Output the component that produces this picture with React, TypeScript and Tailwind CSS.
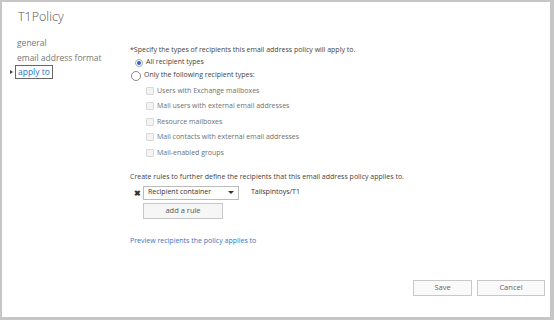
import React from "react";

const font = { fontFamily: '"Open Sans", "Noto Sans", sans-serif' };

function Check({ label }: { label: string }) {
  return (
    <div className="flex items-center h-[15.5px] pl-[16px]">
      <span className="w-[8px] h-[8px] border border-[#d8d8d8] bg-[#f4f4f4] rounded-[1px] mr-[3px]" />
      <span className="text-[7px] text-[#707070]">{label}</span>
    </div>
  );
}

export default function App() {
  return (
    <div style={font} className="w-[554px] h-[320px] bg-[#c6c6c6] pt-[2px] pl-[2px] pr-[4px] pb-[3px]">
      <div className="w-full h-full bg-white flex flex-col">
        <div className="pl-[16px] pt-[6px] text-[12.5px] font-light text-[#555] leading-[18px] h-[30px]">T1Policy</div>
        <div className="flex flex-1">
          <div className="w-[128px] pl-[15px] pt-[3px] text-[8.5px] leading-[15px] text-[#777]">
            <div>general</div>
            <div>email address format</div>
            <div className="relative flex items-center ml-[-2px]">
              <span className="absolute left-[-5px] top-[5px] w-0 h-0 border-y-[2.5px] border-y-transparent border-l-[3px] border-l-[#444]" />
              <span className="border border-[#666] px-[2px] leading-[12px] text-[#2a72c8]">apply to</span>
            </div>
          </div>
          <div className="flex-1 pt-[13px] text-[#444]">
            <div className="text-[7px] leading-[10px]">*Specify the types of recipients this email address policy will apply to.</div>
            <div className="flex items-center h-[13px] pl-[5px] mt-[1px]">
              <span className="w-[8px] h-[8px] rounded-full border border-[#aaa] bg-white flex items-center justify-center mr-[3px]">
                <span className="w-[4px] h-[4px] rounded-full bg-[#2166d4]" />
              </span>
              <span className="text-[7px]">All recipient types</span>
            </div>
            <div className="flex items-center h-[13px] pl-[1px]">
              <span className="w-[10px] h-[10px] rounded-full border border-[#888] bg-white mr-[3px]" />
              <span className="text-[7px]">Only the following recipient types:</span>
            </div>
            <div className="mt-[1px]">
              <Check label="Users with Exchange mailboxes" />
              <Check label="Mail users with external email addresses" />
              <Check label="Resource mailboxes" />
              <Check label="Mail contacts with external email addresses" />
              <Check label="Mail-enabled groups" />
            </div>
            <div className="mt-[11px] text-[7px] leading-[10px]">Create rules to further define the recipients that this email address policy applies to.</div>
            <div className="flex items-center mt-[4px] h-[14px]">
              <span className="w-[13px] text-[8px] text-[#333] pl-[4px] font-bold leading-none">✖</span>
              <div className="w-[96px] h-[14px] border border-[#bbb] flex items-center justify-between px-[4px]">
                <span className="text-[7px] text-[#333]">Recipient container</span>
                <span className="w-0 h-0 border-x-[3px] border-x-transparent border-t-[3px] border-t-[#333]" />
              </div>
              <span className="ml-[12px] text-[7px] text-[#333]">Tailspintoys/T1</span>
            </div>
            <div className="ml-[13px] mt-[3px] w-[80px] h-[16px] border border-[#c8c8c8] bg-[#f6f6f6] flex items-center justify-center text-[7.5px] text-[#555]">add a rule</div>
            <div className="mt-[17px] text-[7px] text-[#3b76c4]">Preview recipients the policy applies to</div>
          </div>
        </div>
        <div className="flex justify-end gap-[5px] pr-[5px] pb-[21px]">
          <div className="w-[59px] h-[16px] border border-[#c8c8c8] bg-[#fafafa] flex items-center justify-center text-[7.5px] text-[#666]">Save</div>
          <div className="w-[68px] h-[16px] border border-[#c8c8c8] bg-[#fafafa] flex items-center justify-center text-[7.5px] text-[#666]">Cancel</div>
        </div>
      </div>
    </div>
  );
}
